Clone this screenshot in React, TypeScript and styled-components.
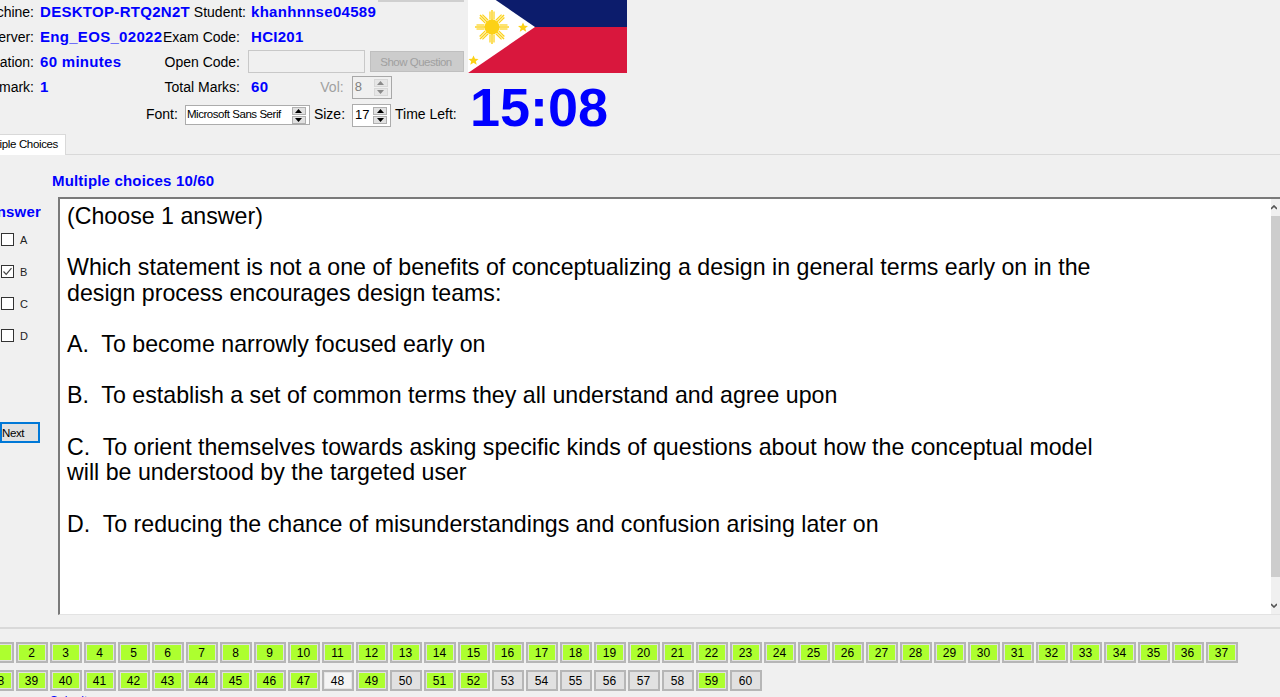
import React from "react";
import styled, { createGlobalStyle } from "styled-components";

const Global = createGlobalStyle`
  html, body { margin: 0; padding: 0; background: #f0f0f0; overflow: hidden; }
  body { font-family: "Liberation Sans", Arial, sans-serif; color: #000; }
`;

const Page = styled.div`
  width: 1280px;
  height: 697px;
  overflow: hidden;
  display: flex;
  flex-direction: column;
  background: #f0f0f0;
  font-size: 14px;
`;

const Header = styled.header`
  height: 134px;
  display: flex;
  flex: none;
`;

const InfoColumn = styled.div`
  width: 468px;
  flex: none;
  display: flex;
  flex-direction: column;
`;

const TopSliver = styled.div`
  height: 2px;
  margin: 0 0 -2px 378px;
  width: 86px;
  background: #cfcfcf;
`;

const InfoGrid = styled.div`
  display: grid;
  grid-template-columns: 34px 117px 89px 1fr;
  column-gap: 0;
  grid-auto-rows: 25px;
  align-items: center;
`;

const Label = styled.span<{ $muted?: boolean; $shift?: number }>`
  justify-self: end;
  white-space: nowrap;
  font-size: 14px;
  margin-top: -2px;
  color: ${(p) => (p.$muted ? "#a0a0a0" : "#000")};
  margin-right: ${(p) => p.$shift ?? 0}px;
`;

const VolLabel = styled(Label)`
  margin-left: 44px;
`;

const Value = styled.span<{ $gap?: number }>`
  white-space: nowrap;
  color: #0000ff;
  font-weight: bold;
  font-size: 15px;
  letter-spacing: 0.3px;
  margin-top: -2px;
  padding-left: ${(p) => p.$gap ?? 6}px;
`;

const CodeCell = styled.div`
  display: flex;
  align-items: flex-start;
  align-self: start;
  padding-left: 8px;
  gap: 5px;
`;

const CodeInput = styled.div`
  width: 117px;
  height: 23px;
  box-sizing: border-box;
  border: 1px solid #c8c8c8;
  background: #f0f0f0;
`;

const ShowButton = styled.button`
  width: 94px;
  height: 21px;
  margin-top: 1px;
  box-sizing: border-box;
  border: 1px solid #bfbfbf;
  background: #cccccc;
  color: #a0a0a0;
  font: 11.5px "Liberation Sans", Arial, sans-serif;
  letter-spacing: -0.5px;
  padding: 0 2px 0 0;
`;

const VolCell = styled.div`
  display: flex;
  align-items: center;
  padding-left: 11px;
  gap: 8px;
`;

const Spinner = styled.div<{ $w: number; $h: number; $off?: boolean }>`
  width: ${(p) => p.$w}px;
  height: ${(p) => p.$h}px;
  box-sizing: border-box;
  flex: none;
  border: 1px solid ${(p) => (p.$off ? "#a8a8a8" : "#acacac")};
  background: ${(p) => (p.$off ? "#f0f0f0" : "#fff")};
  display: flex;
  align-items: center;
  justify-content: space-between;
  padding-left: 1px;
  color: ${(p) => (p.$off ? "#808080" : "#000")};
`;

const SpinValue = styled.span<{ $small?: boolean }>`
  font-size: ${(p) => (p.$small ? "11.5px" : "13px")};
  white-space: nowrap;
  letter-spacing: ${(p) => (p.$small ? "-0.45px" : "0")};
  margin-top: -2px;
  padding-left: ${(p) => (p.$small ? "0" : "1px")};
`;

const Steps = styled.div`
  width: 14px;
  display: flex;
  flex-direction: column;
  gap: 1px;
  margin-right: 3px;
`;

const Step = styled.div<{ $off?: boolean }>`
  height: 8px;
  background: ${(p) => (p.$off ? "#e6e6e6" : "#e1e1e1")};
  border: 1px solid ${(p) => (p.$off ? "#d8d8d8" : "#b0b0b0")};
  box-sizing: border-box;
  display: flex;
  align-items: center;
  justify-content: center;
  color: ${(p) => (p.$off ? "#8a8a8a" : "#000")};
`;

const FontRow = styled.div`
  height: 24px;
  margin-top: 3px;
  display: flex;
  align-items: center;
  padding-left: 146px;
`;

const RowText = styled.span<{ $left?: number }>`
  white-space: nowrap;
  font-size: 14px;
  margin-top: -2px;
  margin-left: ${(p) => p.$left ?? 0}px;
`;

const RowField = styled.div<{ $left: number }>`
  margin-left: ${(p) => p.$left}px;
`;

const FlagColumn = styled.div`
  width: 159px;
  flex: none;
  display: flex;
  flex-direction: column;
`;

const FlagArt = styled.svg`
  display: block;
  flex: none;
`;

const Clock = styled.div`
  margin-top: 6px;
  color: #0000ff;
  font-size: 54px;
  font-weight: bold;
  line-height: 56px;
  padding-left: 2px;
  white-space: nowrap;
`;

const TabStrip = styled.div`
  height: 21px;
  flex: none;
  box-sizing: border-box;
  border-bottom: 1px solid #d9d9d9;
  display: flex;
  align-items: flex-start;
`;

const Tab = styled.div`
  width: 66px;
  height: 21px;
  box-sizing: border-box;
  background: #fff;
  border: 1px solid #d9d9d9;
  border-bottom: none;
  border-left: none;
  direction: rtl;
  text-align: left;
  overflow: hidden;
  padding-right: 7px;
  font-size: 11.5px;
  letter-spacing: -0.35px;
  line-height: 18px;
  white-space: nowrap;
`;

const Body = styled.div`
  flex: none;
  height: 474px;
  display: flex;
  flex-direction: column;
  border-bottom: 2px solid #d9d9d9;
  box-sizing: border-box;
`;

const SectionTitle = styled.div`
  height: 42px;
  box-sizing: border-box;
  padding: 18px 0 0 52px;
  color: #0000ff;
  font-weight: bold;
  font-size: 15px;
  letter-spacing: 0.18px;
  line-height: 15px;
`;

const Main = styled.div`
  height: 418px;
  display: flex;
`;

const AnswerPanel = styled.aside`
  width: 58px;
  flex: none;
  display: flex;
  flex-direction: column;
`;

const AnswerTitle = styled.div`
  width: 41px;
  direction: rtl;
  overflow: hidden;
  white-space: nowrap;
  color: #0000ff;
  font-weight: bold;
  font-size: 15px;
  letter-spacing: 0.18px;
  line-height: 16px;
  margin-top: 7px;
  height: 25px;
`;

const OptionList = styled.div`
  display: flex;
  flex-direction: column;
  padding-left: 1px;
  gap: 19px;
  margin-top: 4px;
`;

const Option = styled.label`
  display: flex;
  align-items: center;
  gap: 6px;
  height: 13px;
  font-size: 11px;
  color: #222;
`;

const Box = styled.span`
  width: 13px;
  height: 13px;
  box-sizing: border-box;
  border: 1px solid #333;
  background: #fff;
  display: flex;
  flex: none;
`;

const NextButton = styled.button`
  width: 40px;
  height: 21px;
  margin: 80px 0 0 0;
  box-sizing: border-box;
  border: 2px solid #0078d7;
  background: #e1e1e1;
  padding: 0;
  text-align: left;
  font: 11.5px "Liberation Sans", Arial, sans-serif;
  color: #000;
  letter-spacing: -0.4px;
`;

const QuestionBox = styled.div`
  flex: 1;
  display: flex;
  background: #fff;
  border-top: 2px solid #7a7a7a;
  border-left: 2px solid #7a7a7a;
  border-bottom: 1px solid #e3e3e3;
  min-width: 0;
`;

const QuestionText = styled.div`
  flex: 1;
  padding: 5px 0 0 7px;
  font-size: 23.2px;
  line-height: 25.63px;
  white-space: pre;
  color: #000;
`;

const Scrollbar = styled.div`
  width: 9px;
  flex: none;
  background: #f0f0f0;
  display: flex;
  flex-direction: column;
  align-items: center;
`;

const ScrollArrow = styled.div`
  height: 17px;
  flex: none;
  display: flex;
  align-items: center;
  justify-content: flex-start;
  width: 9px;
`;

const ScrollThumb = styled.div`
  height: 361px;
  width: 9px;
  background: #cdcdcd;
  flex: none;
`;

const ScrollRest = styled.div`
  flex: 1;
`;

const Footer = styled.footer`
  flex: 1;
  padding-top: 13px;
  margin-left: -18px;
  display: flex;
  flex-direction: column;
  gap: 7px;
  overflow: hidden;
`;

const NavRow = styled.div`
  display: flex;
  gap: 2px;
`;

const NavButton = styled.button<{ $done?: boolean; $current?: boolean }>`
  width: 32px;
  height: 21px;
  flex: none;
  box-sizing: border-box;
  padding: 0 1px 0 0;
  border: 2px solid #b6b6b6;
  background: ${(p) => (p.$current ? "#f4f4f4" : "#e1e1e1")};
  box-shadow: ${(p) =>
    p.$done
      ? "inset 0 0 0 1px #e1e1e1, inset 0 0 0 15px #adff2f"
      : p.$current
        ? "inset 0 0 0 1px #e6e6e6"
        : "none"};
  font: 12px "Liberation Sans", Arial, sans-serif;
  color: #000;
`;

const BottomLinks = styled.div`
  display: flex;
  height: 10px;
  margin-top: -4px;
  color: #0000ff;
  font-size: 12px;
  line-height: 14px;
  white-space: nowrap;
`;

const BottomLink = styled.span<{ $left: number }>`
  margin-left: ${(p) => p.$left}px;
`;

const Arrow: React.FC<{ up?: boolean }> = ({ up }) => (
  <svg width={7} height={4} viewBox="0 0 7 4">
    <path d={up ? "M3.5 0L7 4H0z" : "M0 0h7L3.5 4z"} fill="currentColor" />
  </svg>
);

const StepButtons: React.FC<{ off?: boolean }> = ({ off }) => (
  <Steps>
    <Step $off={off}>
      <Arrow up />
    </Step>
    <Step $off={off}>
      <Arrow />
    </Step>
  </Steps>
);

const Flag: React.FC = () => {
  const rays = Array.from({ length: 8 }, (_, i) => i * 45);
  return (
    <FlagArt width="159" height="73" viewBox="0 0 159 73">
      <rect width="159" height="27" fill="#0c1c6c" />
      <rect y="27" width="159" height="46" fill="#d9173d" />
      <path d="M0 -19L67 27L0 73z" fill="#fff" />
      <g transform="translate(24 27)" fill="#fcd116">
        <circle r="7.5" />
        {rays.map((r) => (
          <g key={r} transform={`rotate(${r})`}>
            <rect x="-2.6" y="-15.5" width="1.2" height="8" />
            <rect x="-0.7" y="-17" width="1.4" height="10" />
            <rect x="1.4" y="-15.5" width="1.2" height="8" />
          </g>
        ))}
      </g>
      <path
        d="M55 22.5l1.5 3.2 3.5.3-2.7 2.3.9 3.4-3.2-1.9-3.2 1.9.9-3.4-2.7-2.3 3.5-.3z"
        fill="#fcd116"
      />
      <path
        d="M5.5 55.5l1.5 3.2 3.5.3-2.7 2.3.9 3.4-3.2-1.9-3.2 1.9.9-3.4-2.7-2.3 3.5-.3z"
        fill="#fcd116"
      />
    </FlagArt>
  );
};

const done = (n: number) => ![48, 50, 53, 54, 55, 56, 57, 58, 60].includes(n);
const range = (a: number, b: number) => Array.from({ length: b - a + 1 }, (_, i) => a + i);

const question = `(Choose 1 answer)

Which statement is not a one of benefits of conceptualizing a design in general terms early on in the
design process encourages design teams:

A.  To become narrowly focused early on

B.  To establish a set of common terms they all understand and agree upon

C.  To orient themselves towards asking specific kinds of questions about how the conceptual model
will be understood by the targeted user

D.  To reducing the chance of misunderstandings and confusion arising later on`;

export default function App() {
  return (
    <Page>
      <Global />
      <Header>
        <InfoColumn>
          <TopSliver />
          <InfoGrid>
            <Label>Machine:</Label>
            <Value>DESKTOP-RTQ2N2T</Value>
            <Label $shift={-6}>Student:</Label>
            <Value $gap={11}>khanhnnse04589</Value>
            <Label>Server:</Label>
            <Value>Eng_EOS_02022</Value>
            <Label>Exam Code:</Label>
            <Value $gap={11}>HCI201</Value>
            <Label>Duration:</Label>
            <Value>60 minutes</Value>
            <Label>Open Code:</Label>
            <CodeCell>
              <CodeInput />
              <ShowButton disabled>Show Question</ShowButton>
            </CodeCell>
            <Label>Q mark:</Label>
            <Value>1</Value>
            <Label>Total Marks:</Label>
            <VolCell>
              <Value $gap={0}>60</Value>
              <VolLabel $muted>Vol:</VolLabel>
              <Spinner $w={40} $h={23} $off>
                <SpinValue>8</SpinValue>
                <StepButtons off />
              </Spinner>
            </VolCell>
          </InfoGrid>
          <FontRow>
            <RowText>Font:</RowText>
            <RowField $left={7}>
              <Spinner $w={125} $h={20}>
                <SpinValue $small>Microsoft Sans Serif</SpinValue>
                <StepButtons />
              </Spinner>
            </RowField>
            <RowText $left={4}>Size:</RowText>
            <RowField $left={7}>
              <Spinner $w={39} $h={23}>
                <SpinValue>17</SpinValue>
                <StepButtons />
              </Spinner>
            </RowField>
            <RowText $left={4}>Time Left:</RowText>
          </FontRow>
        </InfoColumn>
        <FlagColumn>
          <Flag />
          <Clock>15:08</Clock>
        </FlagColumn>
      </Header>
      <TabStrip>
        <Tab>Multiple Choices</Tab>
      </TabStrip>
      <Body>
        <SectionTitle>Multiple choices 10/60</SectionTitle>
        <Main>
          <AnswerPanel>
            <AnswerTitle>Answer</AnswerTitle>
            <OptionList>
              {["A", "B", "C", "D"].map((o) => (
                <Option key={o}>
                  <Box>
                    {o === "B" && (
                      <svg width="11" height="11" viewBox="0 0 11 11">
                        <path d="M1.5 5.5L4.2 8.3L9.5 2.2" fill="none" stroke="#444" strokeWidth="1.2" />
                      </svg>
                    )}
                  </Box>
                  {o}
                </Option>
              ))}
            </OptionList>
            <NextButton>Next</NextButton>
          </AnswerPanel>
          <QuestionBox>
            <QuestionText>{question}</QuestionText>
            <Scrollbar>
              <ScrollArrow>
                <svg width="6" height="5" viewBox="0 0 6 5">
                  <path d="M0 4L3 1L6 4" fill="none" stroke="#555" strokeWidth="1.6" />
                </svg>
              </ScrollArrow>
              <ScrollThumb />
              <ScrollRest />
              <ScrollArrow>
                <svg width="6" height="5" viewBox="0 0 6 5">
                  <path d="M0 1L3 4L6 1" fill="none" stroke="#555" strokeWidth="1.6" />
                </svg>
              </ScrollArrow>
            </Scrollbar>
          </QuestionBox>
        </Main>
      </Body>
      <Footer>
        <NavRow>
          {range(1, 37).map((n) => (
            <NavButton key={n} $done>
              {n === 1 ? "" : n}
            </NavButton>
          ))}
        </NavRow>
        <NavRow>
          {range(38, 60).map((n) => (
            <NavButton key={n} $done={done(n)} $current={n === 48}>
              {n}
            </NavButton>
          ))}
        </NavRow>
        <BottomLinks>
          <BottomLink $left={68}>Submit</BottomLink>
        </BottomLinks>
      </Footer>
    </Page>
  );
}
